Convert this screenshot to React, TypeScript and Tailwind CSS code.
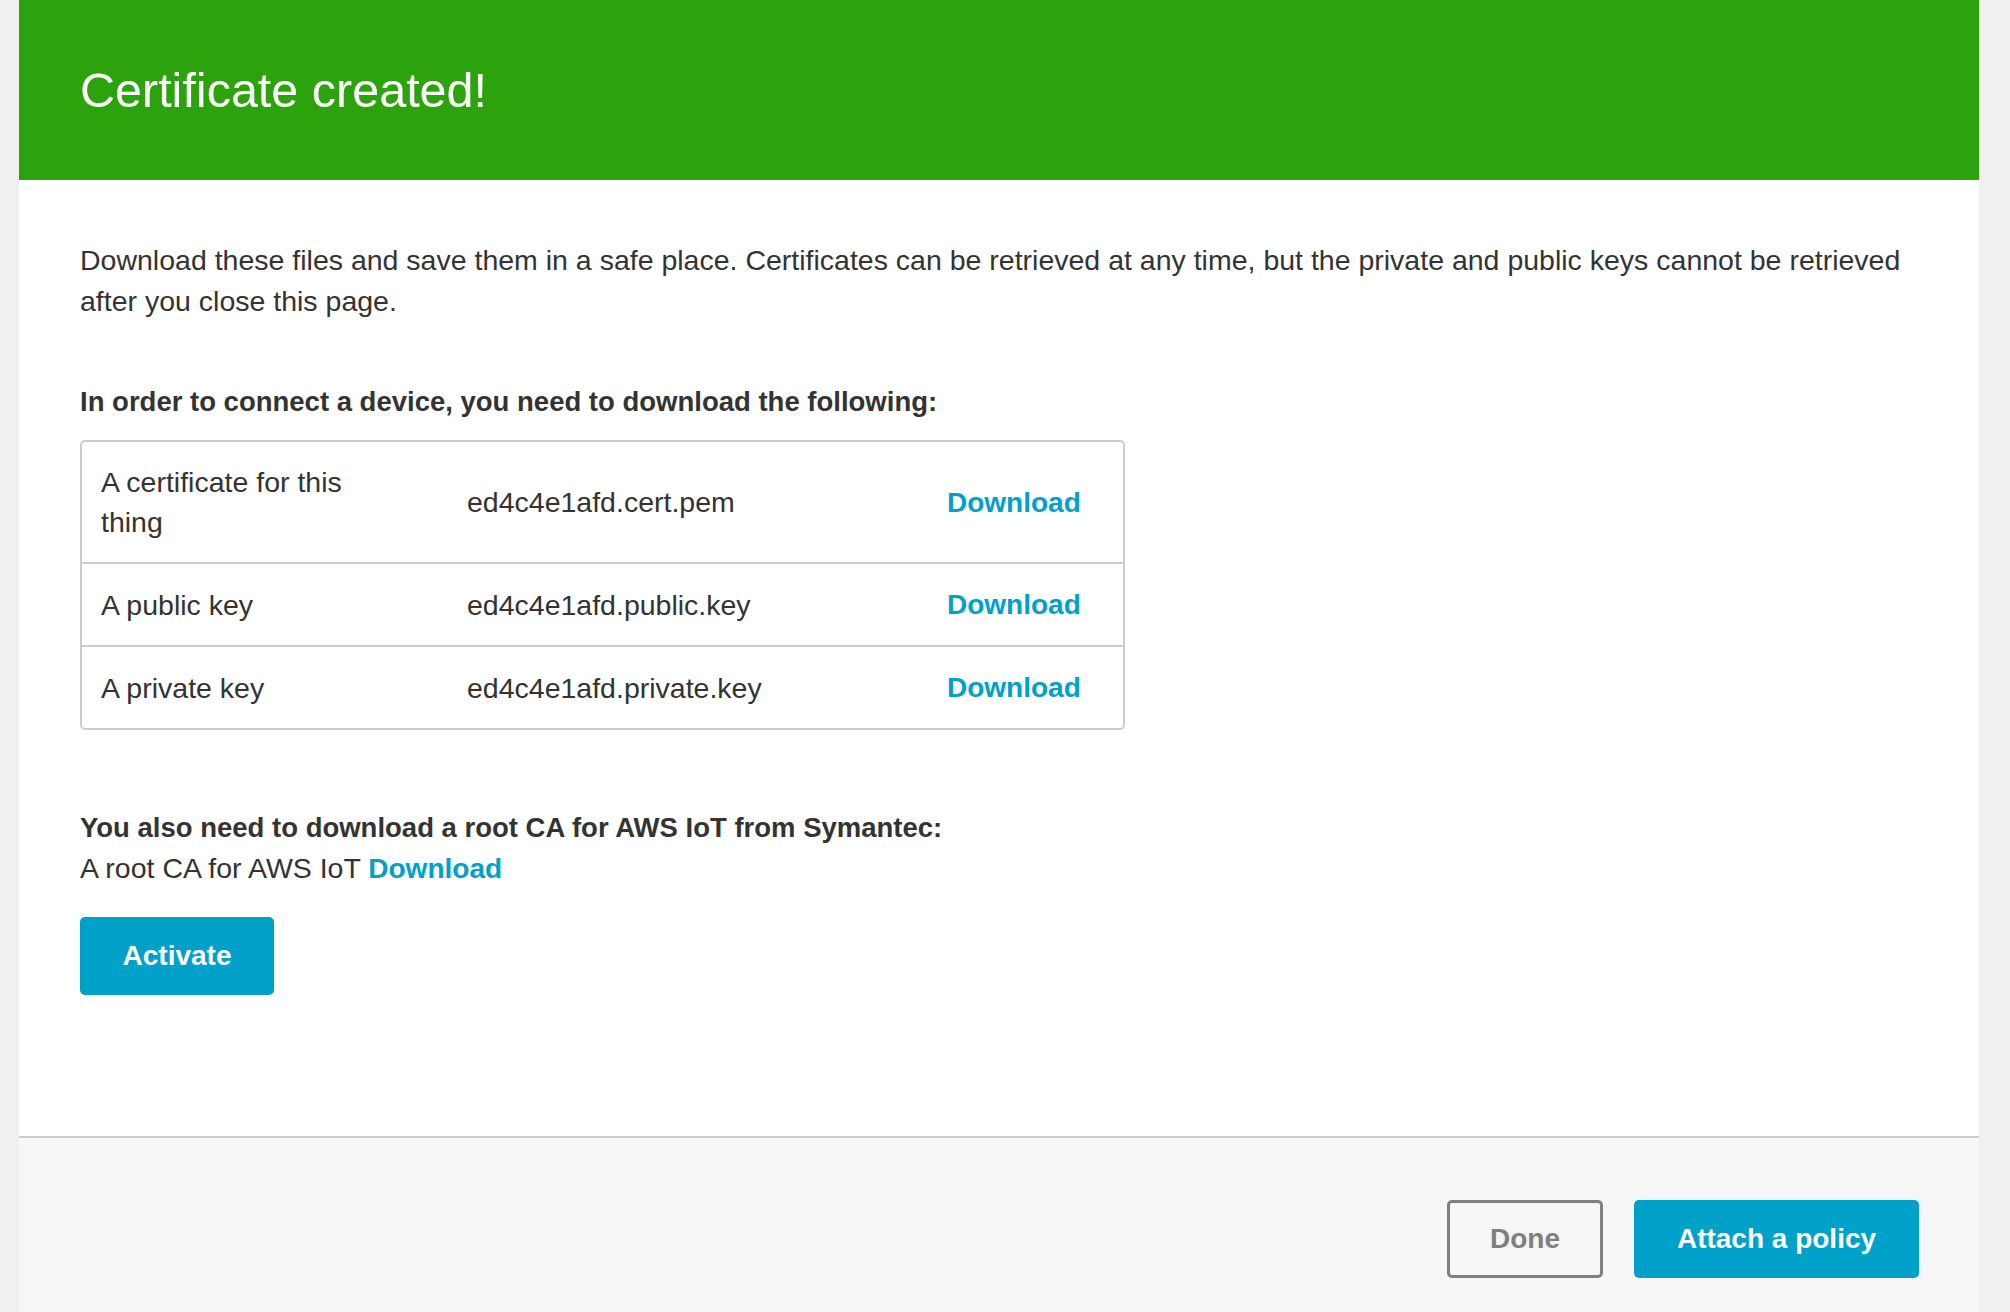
import React from 'react';

const FILES = [
  { label: 'A certificate for this thing', file: 'ed4c4e1afd.cert.pem' },
  { label: 'A public key', file: 'ed4c4e1afd.public.key' },
  { label: 'A private key', file: 'ed4c4e1afd.private.key' },
];

const font = "font-['Liberation_Sans',Arial,sans-serif]";

export default function App() {
  return (
    <div className={`min-h-screen bg-[#f0f0f0] pl-[19px] pr-[31px] text-[#333333] ${font}`}>
      <div className="bg-white">
        {/* Header */}
        <div className="flex h-[180px] items-center bg-[#2ca20c] px-[61px]">
          <h1 className="text-[48.5px] leading-none text-white">Certificate created!</h1>
        </div>

        {/* Body */}
        <div className="px-[61px] pt-[60px] pb-[141px] text-[28.5px]">
          <p className="leading-[41px]">
            Download these files and save them in a safe place. Certificates can be retrieved at any time, but the private and
            public keys cannot be retrieved after you close this page.
          </p>

          <p className="mt-[59px] text-[27.5px] font-bold leading-[41px]">
            In order to connect a device, you need to download the following:
          </p>

          <div className="mt-[18px] w-[1045px] rounded-[5px] border-2 border-[#cccccc]">
            {FILES.map((f, i) => (
              <div key={f.file} className={`flex items-center py-[20px] ${i > 0 ? 'border-t-2 border-[#cccccc]' : ''}`}>
                <div className="w-[365px] shrink-0 pl-[19px] pr-[60px] leading-[40px]">{f.label}</div>
                <div className="w-[481px] shrink-0 pl-[20px] leading-[40px]">{f.file}</div>
                <div className="pl-[19px] leading-[40px]">
                  <a href="#" className="text-[28px] font-bold text-[#00a1c9]">Download</a>
                </div>
              </div>
            ))}
          </div>

          <p className="mt-[77px] text-[27.5px] font-bold leading-[41px]">
            You also need to download a root CA for AWS IoT from Symantec:
          </p>
          <p className="leading-[41px]">
            A root CA for AWS IoT <a href="#" className="text-[28px] font-bold text-[#00a1c9]">Download</a>
          </p>

          <button
            type="button"
            className="mt-[28px] flex h-[78px] w-[194px] items-center justify-center rounded-[5px] bg-[#00a1c9] text-[28px] font-bold text-white"
          >
            Activate
          </button>
        </div>

        {/* Footer */}
        <div className="flex justify-end gap-[31px] border-t-2 border-[#cccccc] bg-[#f6f6f6] pt-[62px] pb-[40px] pr-[60px] text-[28px]">
          <button
            type="button"
            className="flex h-[78px] w-[156px] items-center justify-center rounded-[5px] border-[3px] border-[#808080] font-bold text-[#7f7f7f]"
          >
            Done
          </button>
          <button
            type="button"
            className="flex h-[78px] w-[285px] items-center justify-center rounded-[5px] bg-[#00a1c9] font-bold text-white"
          >
            Attach a policy
          </button>
        </div>
      </div>
    </div>
  );
}
